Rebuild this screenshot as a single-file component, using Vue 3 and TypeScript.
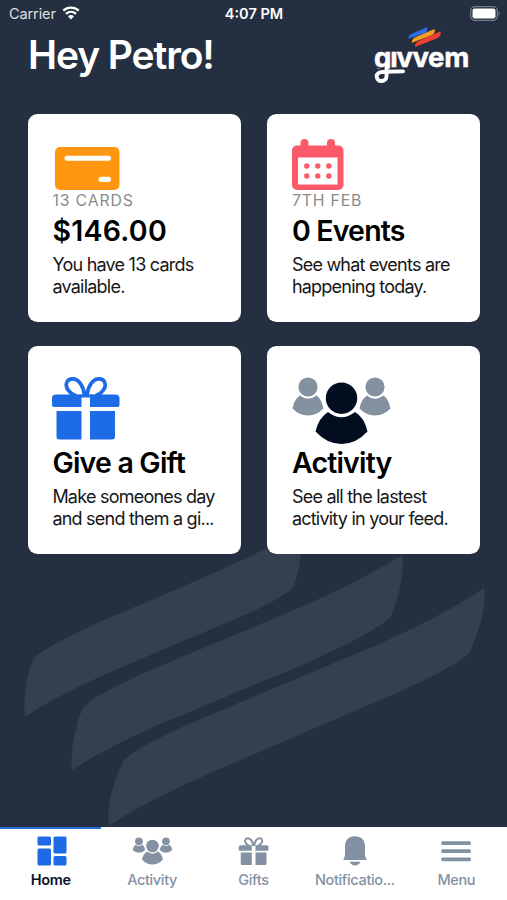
<script setup lang="ts">
type IconName = 'card' | 'calendar' | 'gift' | 'people'

interface Tile {
  icon: IconName
  label?: string
  title: string
  lines: string[]
}

interface Tab {
  icon: 'home' | 'people' | 'gift' | 'bell' | 'menu'
  label: string
}

const tiles: Tile[] = [
  { icon: 'card', label: '13 CARDS', title: '$146.00', lines: ['You have 13 cards', 'available.'] },
  { icon: 'calendar', label: '7TH FEB', title: '0 Events', lines: ['See what events are', 'happening today.'] },
  { icon: 'gift', title: 'Give a Gift', lines: ['Make someones day', 'and send them a gi...'] },
  { icon: 'people', title: 'Activity', lines: ['See all the lastest', 'activity in your feed.'] },
]

const tabs: Tab[] = [
  { icon: 'home', label: 'Home' },
  { icon: 'people', label: 'Activity' },
  { icon: 'gift', label: 'Gifts' },
  { icon: 'bell', label: 'Notificatio...' },
  { icon: 'menu', label: 'Menu' },
]

const activeTab = 'Home'
</script>

<template>
  <div class="screen">
    <svg class="stripes" viewBox="0 0 507 290" aria-hidden="true">
      <path d="M34 118C44 108 85 88 125 71C180 49 230 25 268 8L302 -2C301 20 299 29 294 46C289 53 270 64 240 77L120 128C85 143 50 160 25 177C23 160 26 132 34 118Z" />
      <path d="M83 168C92 157 125 141 165 124L280 76C330 55 370 35 402 15C405 30 399 58 391 76C383 86 350 104 300 126L170 180C130 197 98 213 72 230C70 212 75 185 83 168Z" />
      <path d="M124 220C135 209 170 192 205 177L365 110C410 91 455 68 484 48C487 65 479 92 470 112C462 122 425 141 385 158L215 231C170 251 140 265 109 286C106 268 114 238 124 220Z" />
    </svg>

    <div class="status">
      <div class="carrier">
        <span>Carrier</span>
        <svg class="wifi" viewBox="0 0 18 14">
          <path d="M1.300 4.700C5.800 .7 12.200 .7 16.700 4.700M4 7.800C7 5.100 11 5.100 14 7.800" fill="none" stroke="#fff" stroke-width="2.300" />
          <path d="M5.900 10.200Q9 7.600 12.100 10.200L9 13.400Z" fill="#fff" />
        </svg>
      </div>
      <span class="clock">4:07 PM</span>
      <svg class="battery" viewBox="0 0 31 15">
        <rect x=".7" y=".7" width="26.600" height="13.600" rx="4" fill="none" stroke="#737b87" stroke-width="1.200" />
        <rect x="2.500" y="2.500" width="23" height="10" rx="2.200" fill="#fff" />
        <path d="M28.600 5.200Q31 7.500 28.600 9.800Z" fill="#737b87" />
      </svg>
    </div>

    <header class="header">
      <h1>Hey Petro!</h1>
      <svg class="logo" viewBox="0 0 100 60" role="img" aria-label="givvem">
        <defs>
          <clipPath id="word-clip"><rect width="100" height="43.500" /></clipPath>
        </defs>
        <path d="M35.500 13.800C35.500 10.500 36.500 9.700 39.500 8.400L54 2.300C54.700 6 53.500 7.200 51 8.300Z" fill="#2d6fe8" />
        <path d="M38.800 17.700C38.800 14.300 40.300 13.100 43.500 11.700L61.500 3.900C62.200 7.600 61 9 58 10.400Z" fill="#f5a021" />
        <path d="M42 22C42 18.500 43.500 16.900 46.500 15.500L67.500 6.300C68.200 10.200 67 11.900 64 13.300Z" fill="#ee4035" />
        <g clip-path="url(#word-clip)">
          <text class="word" y="42" x="1 17.300 23.600 39.500 55 71.300">gıvvem</text>
        </g>
        <path d="M13.600 38V50.500C13.600 57.800 3.700 57.700 3.700 51.500C3.700 47.500 7 46.900 12 46.800L30 46.400" fill="none" stroke="#fff" stroke-width="3.900" stroke-linecap="round" />
      </svg>
    </header>

    <main class="grid">
      <article v-for="tile in tiles" :key="tile.title" class="tile">
        <div class="figure" :class="tile.icon">
          <svg v-if="tile.icon === 'card'" viewBox="0 0 65 43">
            <rect width="64.500" height="43" rx="5" fill="#ff9611" />
            <rect x="9.500" y="8.700" width="46.500" height="5" rx="2.500" fill="#fff" />
            <rect x="43.500" y="29.700" width="12.500" height="5.300" rx="2.650" fill="#fff" />
          </svg>
          <svg v-else-if="tile.icon === 'calendar'" viewBox="0 0 52 51">
            <g fill="#fb5a6a">
              <rect x="8.500" width="8" height="13" rx="4" />
              <rect x="35" width="8" height="13" rx="4" />
              <rect y="6.500" width="51.500" height="44.500" rx="5" />
            </g>
            <rect x="6" y="18.500" width="39.500" height="27" fill="#fff" />
            <g fill="#fb5a6a">
              <circle v-for="n in 6" :key="n" :cx="14.800 + ((n - 1) % 3) * 11" :cy="n < 4 ? 27 : 37" r="2.700" />
            </g>
          </svg>
          <svg v-else-if="tile.icon === 'gift'" viewBox="0 0 68 63">
            <g fill="#1e6be6">
              <path d="M4 17.500H29.500V30H2Q0 30 0 28V21.500Q0 17.500 4 17.500Z" />
              <path d="M38 17.500H63.500Q67.500 17.500 67.500 21.500V28Q67.500 30 65.500 30H38Z" />
              <path d="M4.500 34H29.500V62.500H7.500Q4.500 62.500 4.500 59.500Z" />
              <path d="M38 34H63V59.500Q63 62.500 60 62.500H38Z" />
              <rect x="27" y="17.500" width="14" height="3" />
            </g>
            <path d="M32.500 19C32 10 27 1.800 20.500 1.800C14.500 1.800 12.300 8.500 16.500 13.500Q19.500 17.500 24.500 19M35 19C35.500 10 40.500 1.800 47 1.800C53 1.800 55.200 8.500 51 13.500Q48 17.500 43 19" fill="none" stroke="#1e6be6" stroke-width="3.700" />
          </svg>
          <svg v-else viewBox="0 0 99 68">
            <g fill="#8491a1">
              <circle cx="16" cy="10" r="9.600" />
              <path d="M8 18.500Q16 25 24.500 18.500Q29.500 22 31.500 31.500Q24.500 38.500 16 38.500Q7.500 38.500 .5 31.500Q2 22.500 8 18.500Z" />
              <circle cx="83" cy="10" r="9.600" />
              <path d="M75 18.500Q83 25 91.500 18.500Q96.500 22 98.500 31.500Q91.500 38.500 83 38.500Q74.500 38.500 67.500 31.500Q69 22.500 75 18.500Z" />
            </g>
            <g fill="#020e20">
              <circle cx="49.500" cy="21.200" r="15.700" />
              <path d="M36 35Q49.500 45.500 63 35Q72.500 40.500 75.500 54.500Q64 67 49.500 67Q35 67 23.500 54.500Q26.500 41 36 35Z" />
            </g>
          </svg>
        </div>
        <p v-if="tile.label" class="label">{{ tile.label }}</p>
        <h2 :class="{ amount: tile.icon === 'card' }">{{ tile.title }}</h2>
        <p class="copy"><span v-for="line in tile.lines" :key="line">{{ line }}</span></p>
      </article>
    </main>

    <nav class="tabs">
      <div v-for="tab in tabs" :key="tab.label" class="tab" :class="{ active: tab.label === activeTab }">
        <svg viewBox="0 0 42 32" fill="currentColor">
          <g v-if="tab.icon === 'home'">
            <rect x="7.500" y="1.500" width="13.500" height="9" rx="1.500" />
            <rect x="7.500" y="13.500" width="13.500" height="17" rx="1.500" />
            <rect x="23.500" y="1.500" width="13" height="17" rx="1.500" />
            <rect x="23.500" y="21" width="13" height="9.500" rx="1.500" />
          </g>
          <g v-else-if="tab.icon === 'people'" transform="translate(1.500 2.300) scale(.403)">
            <circle cx="16" cy="10" r="9.600" />
            <path d="M8 18.500Q16 25 24.500 18.500Q29.500 22 31.500 31.500Q24.500 38.500 16 38.500Q7.500 38.500 .5 31.500Q2 22.500 8 18.500Z" />
            <circle cx="83" cy="10" r="9.600" />
            <path d="M75 18.500Q83 25 91.500 18.500Q96.500 22 98.500 31.500Q91.500 38.500 83 38.500Q74.500 38.500 67.500 31.500Q69 22.500 75 18.500Z" />
            <circle cx="49.500" cy="21.700" r="15.700" />
            <path d="M36 35.500Q49.500 46 63 35.500Q72.500 41 75.500 55Q64 67.500 49.500 67.500Q35 67.500 23.500 55Q26.500 41.500 36 35.500Z" />
          </g>
          <g v-else-if="tab.icon === 'gift'" transform="translate(6.800 2.500) scale(.44)">
            <path d="M4 17.500H29.500V30H2Q0 30 0 28V21.500Q0 17.500 4 17.500Z" />
            <path d="M38 17.500H63.500Q67.500 17.500 67.500 21.500V28Q67.500 30 65.500 30H38Z" />
            <path d="M4.500 34H29.500V62.500H7.500Q4.500 62.500 4.500 59.500Z" />
            <path d="M38 34H63V59.500Q63 62.500 60 62.500H38Z" />
            <path d="M32.500 19C32 10 27 1.800 20.500 1.800C14.500 1.800 12.300 8.500 16.500 13.500Q19.500 17.500 24.500 19M35 19C35.500 10 40.500 1.800 47 1.800C53 1.800 55.200 8.500 51 13.500Q48 17.500 43 19" fill="none" stroke="currentColor" stroke-width="4.400" />
          </g>
          <g v-else-if="tab.icon === 'bell'">
            <path d="M21 1.300C27 1.300 31 5 31 11V19Q31 22 32.800 25H9.200Q11 22 11 19V11C11 5 15 1.300 21 1.300Z" />
            <path d="M15.500 26.700H26.500Q24.500 30.500 21 30.500Q17.500 30.500 15.500 26.700Z" />
          </g>
          <g v-else>
            <rect x="6.300" y="6.200" width="29.500" height="3.800" rx="1.300" />
            <rect x="6.300" y="14.300" width="29.500" height="3.800" rx="1.300" />
            <rect x="6.300" y="22.400" width="29.500" height="3.800" rx="1.300" />
          </g>
        </svg>
        <span>{{ tab.label }}</span>
      </div>
    </nav>
  </div>
</template>

<style>
body {
  margin: 0;
  background: #243041;
}
</style>

<style scoped>
.screen {
  position: relative;
  display: flex;
  flex-direction: column;
  width: 507px;
  height: 900px;
  overflow: hidden;
  background: #243041;
  font-family: Inter, 'Liberation Sans', sans-serif;
  color: #000;
}
.stripes {
  position: absolute;
  left: 0;
  top: 540px;
  width: 507px;
  height: 290px;
  fill: #343f4f;
}
.status {
  display: grid;
  grid-template-columns: 1fr auto 1fr;
  align-items: center;
  height: 27px;
  padding: 0 6px 0 9px;
  color: #fff;
  font-size: 14.500px;
}
.carrier {
  display: flex;
  align-items: center;
  gap: 6px;
  color: #dde0e4;
  letter-spacing: -.1px;
}
.wifi {
  width: 18px;
  height: 14px;
  margin-top: -2px;
}
.clock {
  font-weight: 600;
  margin-right: 2px;
}
.battery {
  justify-self: end;
  width: 31px;
  height: 15px;
}
.header {
  position: relative;
  display: flex;
  justify-content: space-between;
  height: 86.500px;
  padding: 0 34px 0 28px;
}
h1 {
  margin: 3px 0 0;
  color: #fff;
  font-size: 39px;
  font-weight: 600;
  line-height: 50px;
  letter-spacing: -1.100px;
}
.logo {
  width: 100px;
  height: 60px;
  margin-top: -2.500px;
}
.word {
  fill: #fff;
  stroke: #fff;
  stroke-width: .5px;
  font: 700 27.500px Inter, sans-serif;
}
.grid {
  position: relative;
  display: grid;
  grid-template-columns: 213px 213px;
  grid-auto-rows: 208px;
  gap: 24px 26.500px;
  padding-left: 27.700px;
}
.tile {
  display: flex;
  flex-direction: column;
  box-sizing: border-box;
  padding-left: 24.700px;
  border-radius: 9.500px;
  background: #fff;
}
.figure {
  display: flex;
  align-items: flex-end;
  height: 76px;
}
.figure svg {
  display: block;
}
.card svg {
  width: 65px;
  height: 43px;
  margin-left: 2.500px;
}
.calendar svg {
  width: 52px;
  height: 51px;
}
.gift,
.people {
  align-items: flex-start;
  height: 67px;
  padding: 31px 0 0;
}
.gift svg {
  width: 68px;
  height: 63px;
}
.people svg {
  width: 99px;
  height: 68px;
}
.label {
  margin: 0;
  color: #8b8b8b;
  font-size: 15.800px;
  line-height: 21px;
  letter-spacing: .85px;
}
h2 {
  margin: 0;
  font-size: 28.500px;
  font-weight: 600;
  line-height: 38px;
  letter-spacing: -.8px;
}
.label + h2 {
  margin-top: 1px;
}
h2.amount {
  letter-spacing: .25px;
}
.copy {
  display: flex;
  flex-direction: column;
  margin: 4px 0 0;
  color: #161616;
  font-size: 18px;
  line-height: 22px;
  letter-spacing: -.77px;
  white-space: nowrap;
}
.tabs {
  position: relative;
  display: grid;
  grid-template-columns: repeat(5, 1fr);
  height: 73.500px;
  margin-top: auto;
  background: #fff;
}
.tab {
  display: flex;
  flex-direction: column;
  align-items: center;
  box-sizing: border-box;
  padding-top: 6px;
  border-top: 2.500px solid transparent;
  color: #8391a2;
}
.tab svg {
  width: 42px;
  height: 32px;
}
.tab span {
  margin-top: 3px;
  font-size: 14.500px;
  font-weight: 500;
  line-height: 20px;
  letter-spacing: -.35px;
  white-space: nowrap;
}
.tab.active {
  border-color: #2b70d8;
  color: #1e6be6;
}
.tab.active span {
  color: #07122b;
  font-weight: 600;
}
</style>
